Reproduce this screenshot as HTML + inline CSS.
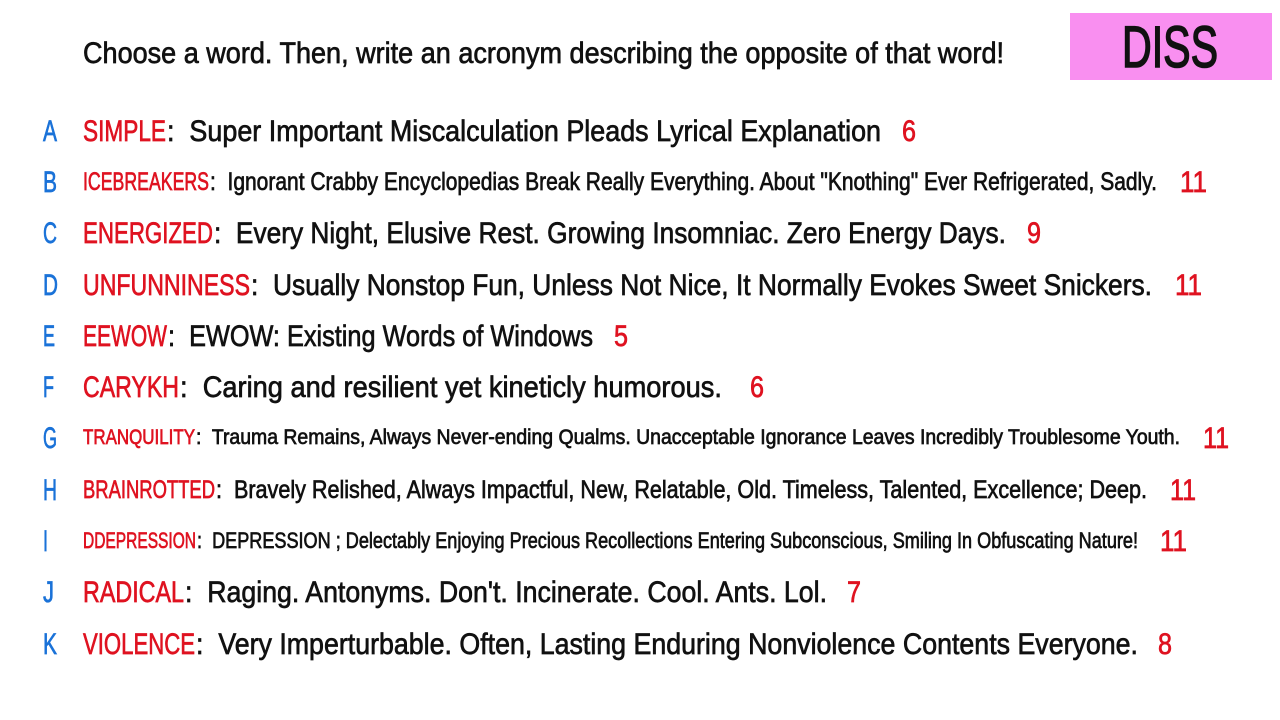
<!DOCTYPE html>
<html><head><meta charset="utf-8"><style>
html,body{margin:0;padding:0;background:#fff;}
svg{display:block;}
text{font-family:"Liberation Sans",sans-serif;white-space:pre;stroke-width:0.7px;}
.l{fill:#1a72d8;stroke:#1a72d8}.r{fill:#df1220;stroke:#df1220}.k{fill:#111;stroke:#111}
</style></head><body>
<svg width="1280" height="720" viewBox="0 0 1280 720" xml:space="preserve">
<rect x="1070" y="13" width="202" height="67" fill="#f98ff0"/>
<text x="1122" y="67" font-size="58" class="k" style="stroke-width:1.6px" textLength="96" lengthAdjust="spacingAndGlyphs">DISS</text>
<text x="83" y="63" font-size="30" class="k" textLength="921" lengthAdjust="spacingAndGlyphs">Choose a word. Then, write an acronym describing the opposite of that word!</text>

<g font-size="30">
<text x="43" y="141" class="l" textLength="14" lengthAdjust="spacingAndGlyphs">A</text>
<text x="43" y="192" class="l" textLength="14" lengthAdjust="spacingAndGlyphs">B</text>
<text x="43" y="243" class="l" textLength="14" lengthAdjust="spacingAndGlyphs">C</text>
<text x="43" y="295" class="l" textLength="15" lengthAdjust="spacingAndGlyphs">D</text>
<text x="43" y="346" class="l" textLength="12" lengthAdjust="spacingAndGlyphs">E</text>
<text x="43" y="397" class="l" textLength="11" lengthAdjust="spacingAndGlyphs">F</text>
<text x="43" y="448" class="l" textLength="14" lengthAdjust="spacingAndGlyphs">G</text>
<text x="43" y="500" class="l" textLength="14" lengthAdjust="spacingAndGlyphs">H</text>
<text x="43" y="551" class="l" textLength="5" lengthAdjust="spacingAndGlyphs">I</text>
<text x="43" y="602" class="l" textLength="11" lengthAdjust="spacingAndGlyphs">J</text>
<text x="43" y="654" class="l" textLength="14" lengthAdjust="spacingAndGlyphs">K</text>
</g>

<g font-size="30">
<text x="83" y="141" class="r" textLength="83" lengthAdjust="spacingAndGlyphs">SIMPLE</text>
<text x="167" y="141" class="k" textLength="714" lengthAdjust="spacingAndGlyphs">:  Super Important Miscalculation Pleads Lyrical Explanation</text>
<text x="902" y="141" class="r" textLength="14" lengthAdjust="spacingAndGlyphs">6</text>
</g>
<g font-size="25">
<text x="83" y="190" class="r" textLength="126" lengthAdjust="spacingAndGlyphs">ICEBREAKERS</text>
<text x="210" y="190" class="k" textLength="947" lengthAdjust="spacingAndGlyphs">:  Ignorant Crabby Encyclopedias Break Really Everything. About "Knothing" Ever Refrigerated, Sadly.</text>
</g>
<text x="1180" y="192" font-size="30" class="r" textLength="27" lengthAdjust="spacingAndGlyphs">11</text>
<g font-size="30">
<text x="83" y="243" class="r" textLength="130" lengthAdjust="spacingAndGlyphs">ENERGIZED</text>
<text x="214" y="243" class="k" textLength="792" lengthAdjust="spacingAndGlyphs">:  Every Night, Elusive Rest. Growing Insomniac. Zero Energy Days.</text>
<text x="1027" y="243" class="r" textLength="14" lengthAdjust="spacingAndGlyphs">9</text>

<text x="83" y="295" class="r" textLength="167" lengthAdjust="spacingAndGlyphs">UNFUNNINESS</text>
<text x="251" y="295" class="k" textLength="901" lengthAdjust="spacingAndGlyphs">:  Usually Nonstop Fun, Unless Not Nice, It Normally Evokes Sweet Snickers.</text>
<text x="1175" y="295" class="r" textLength="27" lengthAdjust="spacingAndGlyphs">11</text>

<text x="83" y="346" class="r" textLength="84" lengthAdjust="spacingAndGlyphs">EEWOW</text>
<text x="168" y="346" class="k" textLength="425" lengthAdjust="spacingAndGlyphs">:  EWOW: Existing Words of Windows</text>
<text x="614" y="346" class="r" textLength="14" lengthAdjust="spacingAndGlyphs">5</text>

<text x="83" y="397" class="r" textLength="96" lengthAdjust="spacingAndGlyphs">CARYKH</text>
<text x="180" y="397" class="k" textLength="542" lengthAdjust="spacingAndGlyphs">:  Caring and resilient yet kineticly humorous.</text>
<text x="750" y="397" class="r" textLength="14" lengthAdjust="spacingAndGlyphs">6</text>
</g>
<g font-size="21">
<text x="83" y="444" class="r" textLength="112" lengthAdjust="spacingAndGlyphs">TRANQUILITY</text>
<text x="196" y="444" class="k" textLength="984" lengthAdjust="spacingAndGlyphs">:  Trauma Remains, Always Never-ending Qualms. Unacceptable Ignorance Leaves Incredibly Troublesome Youth.</text>
</g>
<text x="1203" y="448" font-size="30" class="r" textLength="26" lengthAdjust="spacingAndGlyphs">11</text>
<g font-size="25">
<text x="83" y="498" class="r" textLength="132" lengthAdjust="spacingAndGlyphs">BRAINROTTED</text>
<text x="216" y="498" class="k" textLength="931" lengthAdjust="spacingAndGlyphs">:  Bravely Relished, Always Impactful, New, Relatable, Old. Timeless, Talented, Excellence; Deep.</text>
</g>
<text x="1170" y="500" font-size="30" class="r" textLength="26" lengthAdjust="spacingAndGlyphs">11</text>
<g font-size="22">
<text x="83" y="548" class="r" textLength="113" lengthAdjust="spacingAndGlyphs">DDEPRESSION</text>
<text x="197" y="548" class="k" textLength="941" lengthAdjust="spacingAndGlyphs">:  DEPRESSION ; Delectably Enjoying Precious Recollections Entering Subconscious, Smiling In Obfuscating Nature!</text>
</g>
<text x="1160" y="551" font-size="30" class="r" textLength="27" lengthAdjust="spacingAndGlyphs">11</text>
<g font-size="30">
<text x="83" y="602" class="r" textLength="101" lengthAdjust="spacingAndGlyphs">RADICAL</text>
<text x="185" y="602" class="k" textLength="642" lengthAdjust="spacingAndGlyphs">:  Raging. Antonyms. Don't. Incinerate. Cool. Ants. Lol.</text>
<text x="847" y="602" class="r" textLength="14" lengthAdjust="spacingAndGlyphs">7</text>

<text x="83" y="654" class="r" textLength="112" lengthAdjust="spacingAndGlyphs">VIOLENCE</text>
<text x="196" y="654" class="k" textLength="942" lengthAdjust="spacingAndGlyphs">:  Very Imperturbable. Often, Lasting Enduring Nonviolence Contents Everyone.</text>
<text x="1158" y="654" class="r" textLength="14" lengthAdjust="spacingAndGlyphs">8</text>
</g>
</svg>
</body></html>
